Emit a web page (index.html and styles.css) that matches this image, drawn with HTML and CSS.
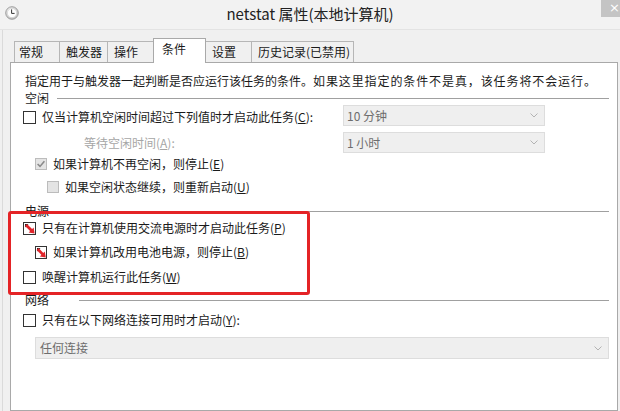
FILE: index.html
```html
<!DOCTYPE html>
<html lang="zh-CN">
<head>
<meta charset="utf-8">
<title>netstat 属性(本地计算机)</title>
<link rel="stylesheet" href="styles.css">
</head>
<body>
<div class="window">
  <div class="titlebar">
    <svg class="appicon" width="14" height="14" viewBox="0 0 14 14">
      <defs>
        <radialGradient id="ring" cx="0.4" cy="0.35" r="0.7">
          <stop offset="0" stop-color="#ffffff"/>
          <stop offset="1" stop-color="#b9b9b9"/>
        </radialGradient>
      </defs>
      <circle cx="7" cy="7" r="6.3" fill="url(#ring)" stroke="#8d8d8d" stroke-width="0.8"/>
      <circle cx="7" cy="7" r="4.6" fill="#fdfdfd" stroke="#c9c9c9" stroke-width="0.5"/>
      <path d="M6.6 3.4 V7.4 H9.6" fill="none" stroke="#333" stroke-width="1"/>
    </svg>
    <div class="title">netstat 属性(本地计算机)</div>
    <div class="close">×</div>
  </div>
  <div class="body">
    <div class="tabs">
      <div class="tab t1">常规</div>
      <div class="tab t2">触发器</div>
      <div class="tab t3">操作</div>
      <div class="tab t4 active">条件</div>
      <div class="tab t5">设置</div>
      <div class="tab t6">历史记录(已禁用)</div>
    </div>
    <div class="panel">
      <div class="desc"><span>指定用于与触发器一起判断是否应运行该任务的条件。</span><span class="desc2">如果这里指定的条件不是真，该任务将不会运行。</span></div>

      <div class="group idle"><span>空闲</span><i class="rule"></i></div>
      <div class="idle-grid">
        <div class="row check">
          <span class="cb"></span><span>仅当计算机空闲时间超过下列值时才启动此任务(<u>C</u>):</span>
        </div>
        <div class="combo"><span>10 分钟</span><svg class="chev" width="8" height="5" viewBox="0 0 8 5"><path d="M0.5 0.5 L4 4 L7.5 0.5" fill="none" stroke="#b3b3b3"/></svg></div>
        <div class="row wait">等待空闲时间(<u>A</u>):</div>
        <div class="combo"><span>1 小时</span><svg class="chev" width="8" height="5" viewBox="0 0 8 5"><path d="M0.5 0.5 L4 4 L7.5 0.5" fill="none" stroke="#b3b3b3"/></svg></div>
      </div>
      <div class="row check r-e">
        <svg class="cbsvg" width="12" height="12" viewBox="0 0 12 12"><rect x="0.5" y="0.5" width="11" height="11" fill="#e4e4e4" stroke="#bcbcbc"/><path d="M2.6 6 L5 8.4 L9.4 3.2" fill="none" stroke="#8a8a8a" stroke-width="1.6"/></svg>
        <span>如果计算机不再空闲，则停止(<u>E</u>)</span>
      </div>
      <div class="row check r-u">
        <span class="cb dis"></span><span>如果空闲状态继续，则重新启动(<u>U</u>)</span>
      </div>

      <div class="group power"><span>电源</span><i class="rule"></i></div>
      <div class="row check r-p">
        <svg class="cbsvg" width="13" height="13" viewBox="0 0 13 13"><rect x="0.5" y="0.5" width="12" height="12" fill="#fff" stroke="#333"/><path d="M2 2 H5.5 L2 5.5 Z" fill="#222"/><path d="M3 3 L8.6 8.6" stroke="#e0242a" stroke-width="2.8"/><path d="M11.6 11.6 L5.6 10.6 L10.6 5.6 Z" fill="#e0242a"/></svg>
        <span>只有在计算机使用交流电源时才启动此任务(<u>P</u>)</span>
      </div>
      <div class="row check r-b">
        <svg class="cbsvg" width="12" height="13" viewBox="0 0 12 13"><rect x="0.5" y="0.5" width="11" height="12" fill="#fff" stroke="#333"/><path d="M2 2 H5.5 L2 5.5 Z" fill="#222"/><path d="M2.6 3 L7.8 8.4" stroke="#e0242a" stroke-width="2.8"/><path d="M10.8 11.6 L4.8 10.4 L9.8 5.6 Z" fill="#e0242a"/></svg>
        <span>如果计算机改用电池电源，则停止(<u>B</u>)</span>
      </div>
      <div class="row check r-w">
        <span class="cb"></span><span>唤醒计算机运行此任务(<u>W</u>)</span>
      </div>

      <div class="group net"><span>网络</span><i class="rule"></i></div>
      <div class="row check r-y">
        <span class="cb"></span><span>只有在以下网络连接可用时才启动(<u>Y</u>):</span>
      </div>
      <div class="combo wide"><span>任何连接</span><svg class="chev" width="8" height="5" viewBox="0 0 8 5"><path d="M0.5 0.5 L4 4 L7.5 0.5" fill="none" stroke="#b3b3b3"/></svg></div>

      <div class="annot"></div>
    </div>
  </div>
</div>
</body>
</html>
```

FILE: styles.css
```css
* {
  box-sizing: border-box;
  margin: 0;
  padding: 0;
}

html, body {
  width: 620px;
  height: 411px;
  overflow: hidden;
}

body {
  font-family: "Noto Sans CJK SC", "Microsoft YaHei", sans-serif;
  font-size: 12px;
  color: #1a1a1a;
  background: #f0f0f0;
}

.window {
  width: 620px;
  height: 411px;
  display: flex;
  flex-direction: column;
  overflow: hidden;
}

/* title bar */
.titlebar {
  flex: none;
  height: 30px;
  display: grid;
  grid-template-columns: 1fr auto 1fr;
  align-items: start;
  background: #f2f2f2;
  border-bottom: 1px solid #e3e3e3;
}

.appicon {
  margin: 6px 0 0 5px;
}

.title {
  font-size: 15px;
  line-height: 20px;
  padding-top: 4px;
  color: #222;
}

.close {
  justify-self: end;
  width: 19px;
  height: 17px;
  background: #c4c4c4;
  color: #fff;
  font-family: "DejaVu Sans", sans-serif;
  font-size: 13px;
  line-height: 16px;
  padding-left: 8px;
  overflow: hidden;
}

/* body */
.body {
  flex: 1;
  display: flex;
  flex-direction: column;
  margin-left: 2px;
  border-left: 1px solid #dadada;
}

.tabs {
  flex: none;
  height: 32px;
  display: flex;
  align-items: flex-end;
  padding-left: 11px;
}

.tab {
  height: 21px;
  border: 1px solid #b6b6b6;
  border-bottom: none;
  background: #f0f0f0;
  margin-left: -1px;
  line-height: 18px;
  padding-top: 1px;
  white-space: nowrap;
  color: #1a1a1a;
}

.tab.active {
  height: 25px;
  background: #fff;
  margin-bottom: -1px;
  position: relative;
  z-index: 1;
  border-color: #a9a9a9;
}

.t1 { width: 46px; margin-left: 0; padding-left: 4px; }
.t2 { width: 49px; padding-left: 6px; }
.t3 { width: 47px; padding-left: 6px; }
.t4 { width: 53px; padding-left: 8px; }
.t5 { width: 47px; padding-left: 6px; }
.t6 { width: 103px; padding-left: 6px; }

.panel {
  flex: 1;
  position: relative;
  width: 608px;
  margin-left: 7px;
  background: #fff;
  border: 1px solid #a9a9a9;
  padding: 9px 8px 0 12px;
  display: flex;
  flex-direction: column;
}

.desc {
  height: 17px;
  line-height: 17px;
  padding-left: 2px;
  white-space: nowrap;
}

.desc2 {
  letter-spacing: 0.9px;
}

.group {
  display: flex;
  align-items: center;
  height: 18px;
  padding-left: 2px;
}

.group.idle { height: 16px; }
.group.power { margin-top: 5px; }
.group.net { margin-top: 4px; }

.group .rule {
  flex: 1;
  height: 1px;
  background: #a0a0a0;
  margin-left: 8px;
  margin-top: 2px;
}

.group.net .rule { margin-left: 30px; }

.idle-grid {
  display: grid;
  grid-template-columns: 320px 202px;
  grid-template-rows: 22px 21px;
  row-gap: 5px;
}

.row {
  display: flex;
  align-items: center;
  height: 18px;
  line-height: 18px;
  white-space: nowrap;
}

.idle-grid .row { height: auto; }
.idle-grid .check { padding-top: 2px; }

.check { gap: 6px; }

.cb {
  flex: none;
  width: 13px;
  height: 13px;
  border: 1px solid #333;
  background: #fff;
}

.cb.dis {
  width: 12px;
  height: 12px;
  border-color: #bcbcbc;
  background: #e4e4e4;
}

.cbsvg { flex: none; display: block; }

.wait {
  padding-left: 61px;
  color: #a6a6a6;
}

.r-e { margin-top: 2px; padding-left: 12px; }
.r-u { margin-top: 5px; padding-left: 24px; }
.r-p { margin-top: 0; }
.r-b { margin-top: 6px; padding-left: 12px; }
.r-w { margin-top: 7px; }
.r-y { margin-top: 3px; }

.combo {
  height: 21px;
  display: flex;
  align-items: center;
  justify-content: space-between;
  padding: 0 6px 0 3px;
  background: #efefef;
  border: 1px solid #dddddd;
  color: #6d6d6d;
  line-height: 18px;
}

.idle-grid .combo:first-of-type { height: 22px; }

.combo.wide {
  margin: 8px 0 0 12px;
  height: 22px;
  padding-left: 4px;
}

.chev { flex: none; }

/* red annotation frame drawn over the power section */
.annot {
  position: absolute;
  left: -3px;
  top: 148px;
  width: 302px;
  height: 84px;
  border: 3px solid #e42326;
  border-radius: 3px;
  pointer-events: none;
}
```
